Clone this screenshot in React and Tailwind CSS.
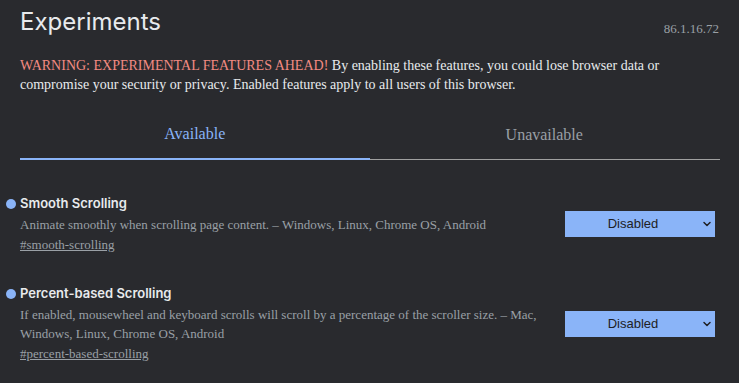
import { ChevronDown } from "lucide-react";

const flags = [
  {
    name: "Smooth Scrolling",
    desc: "Animate smoothly when scrolling page content. – Windows, Linux, Chrome OS, Android",
    link: "#smooth-scrolling",
  },
  {
    name: "Percent-based Scrolling",
    desc: "If enabled, mousewheel and keyboard scrolls will scroll by a percentage of the scroller size. – Mac, Windows, Linux, Chrome OS, Android",
    link: "#percent-based-scrolling",
  },
];

function Flag({ flag }) {
  return (
    <div className="relative flex items-center justify-between">
      <span className="absolute left-[-14px] top-[6px] h-[10px] w-[10px] rounded-full bg-[#8ab4f8]" />
      <div className="w-[530px]">
        <h3 className="font-['Inter',sans-serif] text-[13px] font-semibold leading-[20px] text-[#e8eaed]">
          {flag.name}
        </h3>
        <p className="mt-[2px] text-[13px] leading-[19px] text-[#9aa0a6]">{flag.desc}</p>
        <a className="mt-[1px] block text-[13px] leading-[19px] text-[#9aa0a6] underline">{flag.link}</a>
      </div>
      <div className="relative mr-[4px] mt-[1px]">
        <select className="h-[26px] w-[150px] appearance-none bg-[#8ab4f8] pr-[14px] text-center font-['Liberation_Sans',sans-serif] text-[13px] text-[#202124] outline-none">
          <option>Disabled</option>
        </select>
        <ChevronDown size={12} strokeWidth={3} className="pointer-events-none absolute right-[2px] top-[7px] text-[#202124]" />
      </div>
    </div>
  );
}

export default function App() {
  return (
    <div className="min-h-[383px] bg-[#292a2e] px-[20px] font-['Liberation_Serif',serif] text-[#e8eaed]">
      <div className="flex items-end justify-between pt-[6px]">
        <h1 className="font-['Inter',sans-serif] text-[24px] font-normal leading-[32px] text-[#e8eaed]">Experiments</h1>
        <span className="text-[13px] text-[#9aa0a6]">86.1.16.72</span>
      </div>
      <p className="mt-[18px] w-[670px] text-[14px] leading-[19px] text-[#e8eaed]">
        <span className="text-[#f28b82]">WARNING: EXPERIMENTAL FEATURES AHEAD!</span> By enabling these features, you could lose browser data or compromise your security or privacy. Enabled features apply to all users of this browser.
      </p>
      <div className="mt-[22px] flex">
        <div className="flex h-[44px] w-1/2 items-start justify-center border-b-2 border-[#8ab4f8] pt-[6px] text-[16px] text-[#8ab4f8]">
          Available
        </div>
        <div className="flex h-[44px] w-1/2 items-start justify-center pt-[7px] text-[16px] text-[#9aa0a6]">
          <span>Unavailable</span>
        </div>
      </div>
      <div className="-mt-[1px] ml-[350px] h-[1px] w-[350px] bg-[#a0a0a0]" />
      <div className="mt-[33px] flex flex-col gap-[29px]">
        {flags.map((f) => (
          <Flag key={f.name} flag={f} />
        ))}
      </div>
    </div>
  );
}
